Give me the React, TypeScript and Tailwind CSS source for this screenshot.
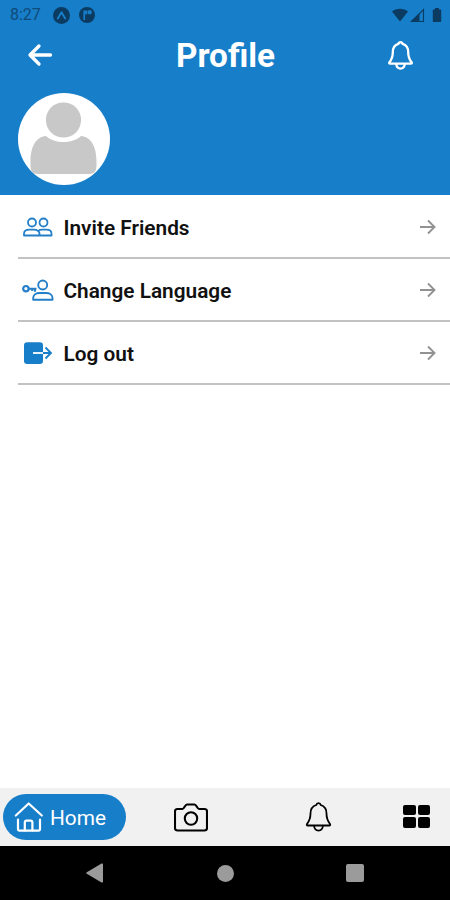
import type { ReactNode } from "react";

function BellIcon({ className }: { className?: string }) {
  return (
    <svg
      viewBox="0 0 26 30"
      className={className}
      fill="none"
      stroke="currentColor"
      strokeLinecap="round"
      strokeLinejoin="round"
    >
      <path d="M13 1.200c-1.400 0-2 .8-2.200 1.800C7 4.200 5 7.500 5 11.500c0 5-1 7.300-3.500 10.500-.5.800-.2 1.500.7 1.500h21.600c.9 0 1.200-.7.700-1.500C22 18.800 21 16.500 21 11.500c0-4-2-7.300-5.800-8.500-.2-1-.8-1.800-2.200-1.800z" />
      <path d="M8.600 24c.3 2.700 2 4.600 4.400 4.600s4.100-1.900 4.400-4.600" />
    </svg>
  );
}

function StatusBar() {
  return (
    <div className="flex h-[30px] items-center justify-between pl-[10px] pr-[8px] text-[#0b3b61]">
      <div className="flex items-center">
        <span className="w-[43px] text-[16px] leading-none text-[#0f4a78]">8:27</span>
        <svg width="17" height="17" viewBox="0 0 17 17">
          <circle cx="8.500" cy="8.500" r="8.500" fill="currentColor" />
          <path d="M4.800 11.500 8.500 5.300l3.700 6.200" fill="none" stroke="#177ec9" strokeWidth="1.900" strokeLinecap="round" strokeLinejoin="round" />
        </svg>
        <svg width="16" height="16" viewBox="0 0 16 16" className="ml-[9px]">
          <circle cx="8" cy="8" r="8" fill="currentColor" />
          <path d="M5.200 13V4.300h2.300v2.200H5.200" fill="none" stroke="#177ec9" strokeWidth="1.700" />
          <rect x="8.800" y="3.300" width="3.800" height="4" rx="1" fill="#177ec9" />
        </svg>
      </div>
      <svg width="50" height="15" viewBox="0 0 50 15" fill="currentColor">
        <path d="M0 3.500C4.500-.2 11.500-.2 16 3.500L8 13.500z" />
        <path d="M27.500 5v9h-9.200z" />
        <path d="M31.500 1.500v12H19.500z" fill="none" stroke="currentColor" strokeWidth="1.100" />
        <path d="M43 0h4v1.500h1.200c.7 0 1 .4 1 1V13c0 .7-.3 1-1 1h-6.400c-.7 0-1-.3-1-1V2.500c0-.6.3-1 1-1H43z" />
      </svg>
    </div>
  );
}

function FriendsIcon() {
  return (
    <svg width="32" height="24" viewBox="0 0 32 24" fill="none" stroke="#247fc8" strokeWidth="1.800" strokeLinejoin="round">
      <circle cx="10" cy="7.500" r="4" />
      <circle cx="21.500" cy="7.500" r="4" />
      <path d="M2 20.500v-1.700c0-2.700 2.500-4.200 5.500-4.200h4c2 0 3.500.5 4.500 1.300 1-.8 2.500-1.300 4.500-1.300h4c3 0 5 1.500 5 4.200v1.700z" />
      <path d="M16 15.900c1 .8 1.500 1.700 1.500 2.700v1.700" />
    </svg>
  );
}

function LanguageIcon() {
  return (
    <svg width="32" height="24" viewBox="0 0 32 24" fill="none" stroke="#247fc8" strokeWidth="1.900" strokeLinejoin="round">
      <circle cx="3.900" cy="10.700" r="2.700" strokeWidth="2.200" />
      <path d="M6.500 10.700h8M13 11v2.800M10.200 11v2" strokeWidth="2.100" />
      <circle cx="20.700" cy="7" r="4.500" />
      <path d="M11.200 21.700v-1.700c0-3.300 3.200-5 6.500-5h6.300c3.300 0 6.500 1.700 6.500 5v1.700z" />
    </svg>
  );
}

function LogoutIcon() {
  return (
    <svg width="32" height="24" viewBox="0 0 32 24" fill="none">
      <rect x="2" y="1.300" width="19" height="21.700" rx="3.200" fill="#177ec9" />
      <path d="M11 12h10" stroke="white" strokeWidth="1.800" />
      <path d="M21 12h8M23.500 6.500 29 12l-5.500 5.500" stroke="#177ec9" strokeWidth="1.800" />
    </svg>
  );
}

function MenuRow({ icon, label }: { icon: ReactNode; label: string }) {
  return (
    <button className="ml-[18px] flex h-[63px] items-center border-b-2 border-[#c2c2c2] pl-[4px] pr-[13px] pt-px text-left">
      {icon}
      <span className="ml-[9.500px] mt-px flex-1 text-[20.800px] font-semibold leading-6 text-[#111]">{label}</span>
      <svg width="18" height="18" viewBox="0 0 18 18" fill="none" stroke="#929292" strokeWidth="1.900">
        <path d="M1 9h14.500M9 2.500 15.500 9 9 15.500" />
      </svg>
    </button>
  );
}

export default function App() {
  return (
    <div className="flex h-screen w-full flex-col bg-white font-['Roboto',sans-serif]">
      <header className="h-[195px] bg-[#177ec9] text-white">
        <StatusBar />
        <div className="grid h-[52px] grid-cols-[80px_1fr_80px] items-center">
          <svg width="26" height="24" viewBox="0 0 26 24" className="-mt-[2px] ml-[27px]" fill="none" stroke="currentColor" strokeWidth="3.300" strokeLinecap="round" strokeLinejoin="round">
            <path d="M23.500 12H3.500M12 3 3 12l9 9" />
          </svg>
          <h1 className="pl-px text-center text-[33.300px] font-bold leading-none">Profile</h1>
          <BellIcon className="-mt-[2px] ml-[18px] h-[29px] w-[25px] stroke-[2.400]" />
        </div>
        <div className="ml-[18px] mt-[11px] size-[92px] overflow-hidden rounded-full bg-white">
          <svg viewBox="0 0 92 92" fill="#c8c8c8">
            <path d="M28 43C18 43.500 12.500 54 12.500 68v4c0 6 2 9 7.500 9h51c5.500 0 7.500-3 7.500-9v-4c0-14-5.500-24.500-15.500-25C54 51 37 51 28 43z" />
            <circle cx="45.500" cy="27" r="17.600" />
          </svg>
        </div>
      </header>

      <main className="flex flex-1 flex-col pt-px">
        <MenuRow icon={<FriendsIcon />} label="Invite Friends" />
        <MenuRow icon={<LanguageIcon />} label="Change Language" />
        <MenuRow icon={<LogoutIcon />} label="Log out" />
      </main>

      <nav className="flex h-[58px] items-center bg-[#f1f1f1] text-black">
        <button className="ml-[3px] flex h-[46px] w-[123px] items-center rounded-full bg-[#177ec9] pl-[11px] text-white">
          <svg width="30" height="32" viewBox="0 0 30 32" fill="none" stroke="currentColor" strokeWidth="2.200" strokeLinecap="round" strokeLinejoin="round">
            <path d="M1.800 14.500 14.700 2.500 27.800 14.500" />
            <path d="M4 18.500V28c0 1 .6 1.600 1.600 1.600h18.800c1 0 1.600-.6 1.600-1.600v-9.500" />
            <path d="M10.800 29.600v-8.100c0-1.200.6-1.800 1.800-1.800h4c1.200 0 1.800.6 1.800 1.800v8.100" />
          </svg>
          <span className="ml-[6px] mt-[2px] text-[20.800px] leading-6">Home</span>
        </button>
        <svg width="34" height="29" viewBox="0 0 34 29" className="ml-[48px]" fill="none" stroke="currentColor" strokeWidth="2.100" strokeLinejoin="round">
          <path d="M3.500 6H8.500c1.800 0 2.500-4.500 4.500-4.500h7.500C22.500 1.500 23.200 6 25 6h5.500c1.500 0 2.500 1 2.500 2.500V25c0 1.500-1 2.500-2.500 2.500h-27C2 27.500 1 26.500 1 25V8.500C1 7 2 6 3.500 6z" />
          <circle cx="17" cy="15.500" r="6.200" />
        </svg>
        <BellIcon className="ml-[97px] h-[30px] w-[27px] stroke-[1.800]" />
        <div className="-mt-[2px] ml-[71px] grid grid-cols-2 gap-[2px]">
          <span className="h-[10.500px] w-[12.500px] rounded-[2px] bg-black" />
          <span className="h-[10.500px] w-[12.500px] rounded-[2px] bg-black" />
          <span className="h-[10.500px] w-[12.500px] rounded-[2px] bg-black" />
          <span className="h-[10.500px] w-[12.500px] rounded-[2px] bg-black" />
        </div>
      </nav>

      <div className="flex h-[54px] items-center bg-black text-[#9b9b9b]">
        <svg width="18" height="20" viewBox="0 0 18 20" className="ml-[86px]" fill="currentColor">
          <path d="M.8 9.200 15.500.6c.8-.5 1.500 0 1.500 1v16.800c0 1-.7 1.500-1.500 1L.8 10.800c-.8-.5-.8-1.100 0-1.600z" />
        </svg>
        <span className="ml-[113px] size-[17px] rounded-full bg-current" />
        <span className="ml-[112px] size-[18px] rounded-[2px] bg-current" />
      </div>
    </div>
  );
}
